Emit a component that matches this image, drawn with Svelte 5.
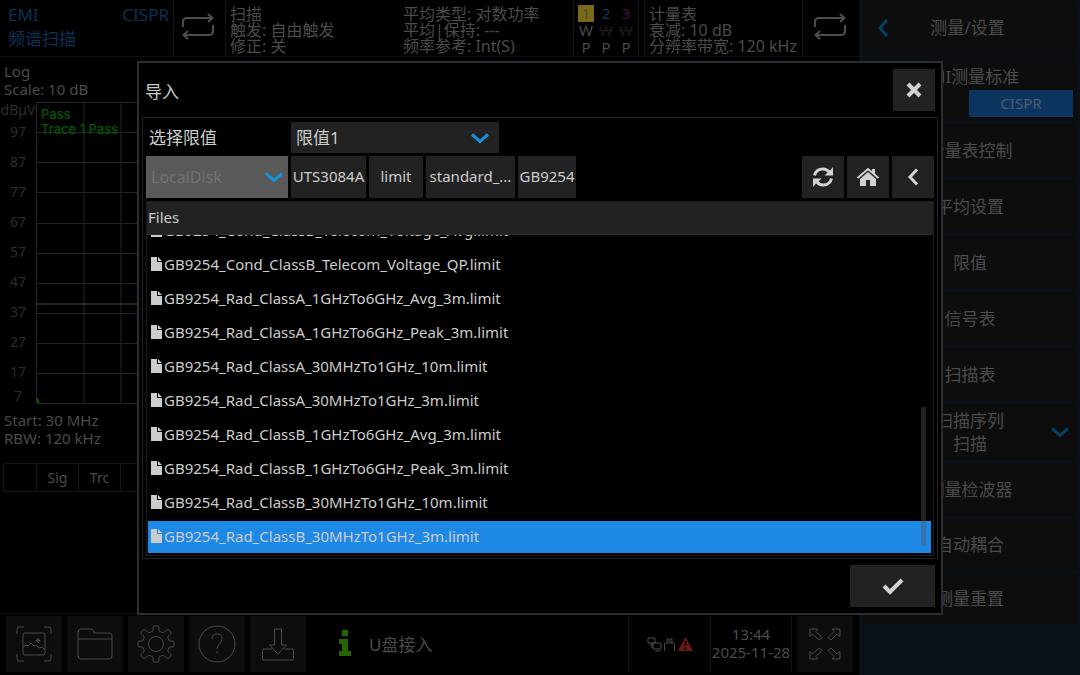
<script>
  const yLabels = [97, 87, 77, 67, 57, 47, 37, 27, 17, 7];
  const gridRows = [30, 60, 90, 121, 151, 181, 211, 241, 271];

  const menuItems = [
    { label: '计量表控制' },
    { label: '平均设置' },
    { label: '限值' },
    { label: '信号表' },
    { label: '扫描表' },
    { label: '扫描序列', value: '扫描' },
    { label: '测量检波器' },
    { label: '自动耦合', short: true },
    { label: '测量重置', short: true }
  ];

  const path = ['UTS3084A', 'limit', 'standard_...', 'GB9254'];

  const files = [
    'GB9254_Cond_ClassB_Telecom_Voltage_Avg.limit',
    'GB9254_Cond_ClassB_Telecom_Voltage_QP.limit',
    'GB9254_Rad_ClassA_1GHzTo6GHz_Avg_3m.limit',
    'GB9254_Rad_ClassA_1GHzTo6GHz_Peak_3m.limit',
    'GB9254_Rad_ClassA_30MHzTo1GHz_10m.limit',
    'GB9254_Rad_ClassA_30MHzTo1GHz_3m.limit',
    'GB9254_Rad_ClassB_1GHzTo6GHz_Avg_3m.limit',
    'GB9254_Rad_ClassB_1GHzTo6GHz_Peak_3m.limit',
    'GB9254_Rad_ClassB_30MHzTo1GHz_10m.limit',
    'GB9254_Rad_ClassB_30MHzTo1GHz_3m.limit'
  ];

  let selected = $state(files.length - 1);
</script>

{#snippet loop()}
  <svg class="loop" width="34" height="28" viewBox="0 0 34 28">
    <path d="M2 14V9q0-4 4-4h25M27 1l4.500 4-4.500 4M32 12v6q0 4-4 4H3M7 18l-4.500 4L7 26" />
  </svg>
{/snippet}

{#snippet chevron()}
  <svg class="chevron" width="20" height="12" viewBox="0 0 20 12"><path d="M2 2.500l8 7 8-7" /></svg>
{/snippet}

<div class="screen">
  <main>
    <header>
      <div class="mode">
        <div class="mode-top"><span>EMI</span><span>CISPR</span></div>
        <div>频谱扫描</div>
      </div>
      <div class="cell center">{@render loop()}</div>
      <div class="cell info">扫描<br />触发: 自由触发<br />修正: 关</div>
      <div class="info">平均类型: 对数功率<br />平均|保持: ---<br />频率参考: Int(S)</div>
      <div class="cell traces">
        <span class="t1">1</span><span class="t2">2</span><span class="t3">3</span>
        <span>W</span><s>W</s><s>W</s>
        <span>P</span><span>P</span><span>P</span>
      </div>
      <div class="cell info meter">计量表<br />衰减: 10 dB<br />分辨率带宽: 120 kHz</div>
      <div class="cell center">{@render loop()}</div>
    </header>

    <section class="sweep">
      <div class="scale">Log<br />Scale: 10 dB</div>
      <div class="chart">
        <div class="axis">
          <span class="unit">dBμV</span>
          {#each yLabels as y}<span>{y}</span>{/each}
        </div>
        <div class="plot">
          <svg width="100%" height="302">
            <g class="grid">
              <path d="M0.500 0v302M48 0v302M85 0v302" />
              <line x1="0" x2="100%" y1="0.500" y2="0.500" />
              {#each gridRows as y}<line x1="0" x2="100%" y1={y + 0.5} y2={y + 0.5} />{/each}
              <line x1="0" x2="100%" y1="301.500" y2="301.500" />
            </g>
            <line class="limit-line" x1="0" x2="100%" y1="202" y2="202" />
            <path class="trace" d="M1 296l2 5" />
          </svg>
          <p>Pass<br />Trace 1 Pass</p>
        </div>
      </div>
      <div class="start">Start: 30 MHz<br />RBW: 120 kHz</div>
      <table>
        <thead><tr><th></th><th>Sig</th><th>Trc</th><th class="wide"></th></tr></thead>
      </table>
    </section>

    <footer>
      <button class="tool" aria-label="Screenshot">
        <svg width="38" height="38" viewBox="0 0 38 38">
          <path d="M2 9V4q0-2 2-2h5M29 2h5q2 0 2 2v5M36 29v5q0 2-2 2h-5M9 36H4q-2 0-2-2v-5" />
          <rect x="8" y="8" width="22" height="22" rx="2" />
          <path d="M8 22l3-2 2 1 3-3 3 3 2-1 3 3 3-1 3 3" />
          <path d="M23 13v5M20.500 15.500h5M21.200 13.700l3.600 3.600M24.800 13.700l-3.600 3.600" />
        </svg>
      </button>
      <button class="tool" aria-label="Files">
        <svg width="38" height="38" viewBox="0 0 38 38">
          <path d="M2 31V7q0-3 3-3h10q2 0 2.500 2l.5 2h15q3 0 3 3v20q0 3-3 3H5q-3 0-3-3zM2 14h34" />
        </svg>
      </button>
      <button class="tool" aria-label="Settings">
        <svg width="38" height="38" viewBox="0 0 38 38">
          <circle cx="19" cy="19" r="7.500" />
          <path d="M16 5.500V2q0-1 1-1h4q1 0 1 1v3.500q0 1 1 1l2.500 1q1 .5 2-.5l2-2q1-1 2 0l2 2q1 1 0 2l-2 2q-1 1-.5 2l1 2.500q0 .5 1 .5h3q1 0 1 1v4q0 1-1 1h-3q-1 0-1 .5l-1 2.500q-.5 1 .5 2l2 2q1 1 0 2l-2 2q-1 1-2 0l-2-2q-1-1-2-.5l-2.500 1q-1 0-1 1V36q0 1-1 1h-4q-1 0-1-1v-3.500q0-1-1-1l-2.500-1q-1-.5-2 .5l-2 2q-1 1-2 0l-2-2q-1-1 0-2l2-2q1-1 .5-2l-1-2.500q0-.5-1-.5H2q-1 0-1-1v-4q0-1 1-1h3q1 0 1-.5l1-2.500q.5-1-.5-2l-2-2q-1-1 0-2l2-2q1-1 2 0l2 2q1 1 2 .5l2.500-1q1 0 1-1z" />
        </svg>
      </button>
      <button class="tool" aria-label="Help">
        <svg width="38" height="38" viewBox="0 0 38 38">
          <circle cx="19" cy="19" r="18" />
          <path d="M14 14q0-5 5-5t5 5q0 3-2.500 5T19 24M19 26.500v2" />
        </svg>
      </button>
      <button class="tool" aria-label="Save">
        <svg width="38" height="38" viewBox="0 0 38 38">
          <path d="M15.500 4h7v16h5L19 29l-8.500-9h5zM13 24H5q-1.500 0-1.500 1.500v8Q3.500 35 5 35h28q1.500 0 1.500-1.500v-8Q34.500 24 33 24h-8" />
        </svg>
      </button>
      <div class="message">
        <svg width="14" height="28" viewBox="0 0 14 28"><path d="M4 1h6v6H4zM1 10h9v12h3v5H1v-5h3v-7H1z" /></svg>
        <span>U盘接入</span>
      </div>
      <div class="status">
        <svg width="46" height="16" viewBox="0 0 46 16">
          <path d="M1 2h7v5H1zM3 9h3M5 7v5M6 7h8v6H6zM8 15h5M17.500 15V8q0-1 1-1h8q1 0 1 1v7M20 7V3h5v4M21 5h3" />
          <path class="warn" d="M38.500 1L46 15H31z" />
          <path class="bang" d="M38.500 5v5M38.500 11.500v2" />
        </svg>
      </div>
      <div class="clock">13:44<br />2025-11-28</div>
      <button class="tool expand" aria-label="Full screen">
        <svg width="32" height="32" viewBox="0 0 32 32">
          <path d="M1 1h8L7 3.500l6 6L10 12 3.500 6 1 8.500zM31 1h-8l2 2.500-6 6 3 2.500 6-6 3 2.500zM1 31h8l-2-2.500 6-6-3-2.500-6.500 6L1 23.500zM31 31h-8l2-2.500-6-6 3-2.500 6 6 3-2.500z" />
        </svg>
      </button>
    </footer>
  </main>

  <aside>
    <div class="menu-title">
      <button aria-label="Back"><svg width="12" height="20" viewBox="0 0 12 20"><path d="M10 2L3 10l7 8" /></svg></button>
      <span>测量/设置</span>
    </div>
    <div class="standard">
      <span>EMI测量标准</span>
      <button>CISPR</button>
    </div>
    {#each menuItems as item}
      <button class="menu-item" class:double={item.value} class:short={item.short}>
        <span>{item.label}</span>
        {#if item.value}
          <span>{item.value}</span>
          <i>{@render chevron()}</i>
        {/if}
      </button>
    {/each}
  </aside>

  <div class="dialog" role="dialog" aria-labelledby="dialog-title">
    <div class="dialog-head">
      <h1 id="dialog-title">导入</h1>
      <button class="square" aria-label="Close">
        <svg width="16" height="16" viewBox="0 0 16 16"><path class="bold" d="M2 2l12 12M14 2L2 14" /></svg>
      </button>
    </div>

    <div class="panel">
      <div class="row limit-row">
        <label for="limit">选择限值</label>
        <div class="select">
          <select id="limit"><option>限值1</option></select>
          {@render chevron()}
        </div>
      </div>

      <div class="row">
        <div class="select disk">
          <select aria-label="Disk" disabled><option>LocalDisk</option></select>
          {@render chevron()}
        </div>
        {#each path as dir, i}
          <button class="crumb crumb-{i}">{dir}</button>
        {/each}
        <div class="nav">
          <button class="square" aria-label="Refresh">
            <svg width="22" height="22" viewBox="0 0 22 22">
              <path class="mid" d="M2.500 9.500Q4 3 11 3q4 0 7 4M19.500 12.500Q18 19 11 19q-4 0-7-4" />
              <path class="solid" d="M21 1v8.500h-8.500l3-3 3-2.500zM1 21v-8.500h8.500l-3 3-3 2.500z" />
            </svg>
          </button>
          <button class="square" aria-label="Home">
            <svg width="24" height="20" viewBox="0 0 24 20">
              <path class="solid" d="M4 12l8-7 8 7v7h-6v-6h-4v6H4zM16 2h3v6l-3-3z" />
              <path class="thin" d="M1.500 11L12 2l10.500 9" />
            </svg>
          </button>
          <button class="square" aria-label="Up">
            <svg width="14" height="20" viewBox="0 0 14 20"><path class="mid" d="M11 2.500L4 10l7 7.500" /></svg>
          </button>
        </div>
      </div>

      <div class="browser">
        <div class="files-head">Files</div>
        <div class="files" role="listbox" aria-label="Files">
          {#each files as file, i}
            <button class="file" class:selected={selected === i} role="option" aria-selected={selected === i} onclick={() => (selected = i)}>
              <svg width="11" height="14" viewBox="0 0 11 14"><path d="M0 0h6v5h5v9H0zM7 0l4 4H7z" /></svg>{file}
            </button>
          {/each}
          <div class="thumb"></div>
        </div>
      </div>
    </div>

    <div class="dialog-foot">
      <button class="ok" aria-label="OK">
        <svg width="22" height="18" viewBox="0 0 22 18"><path class="check" d="M2 9l6 6L20 3" /></svg>
      </button>
    </div>
  </div>
</div>

<style>
  :global(body) {
    background: #000;
  }

  .screen {
    position: relative;
    display: grid;
    grid-template-columns: 1fr 221px;
    min-height: 100vh;
    background: #000;
    color: #4b4b4b;
    font-family: "Noto Sans", "Noto Sans CJK SC", sans-serif;
    font-size: 15px;
  }

  * {
    box-sizing: border-box;
  }

  button,
  select {
    margin: 0;
    padding: 0;
    border: 0;
    border-radius: 0;
    background: none;
    color: inherit;
    font: inherit;
  }

  svg {
    display: block;
    flex: none;
    fill: none;
  }

  main {
    display: flex;
    flex-direction: column;
    min-width: 0;
  }

  /* --- top status bar --- */
  header {
    display: grid;
    grid-template-columns: 173px 52px 1fr 1fr 66px 163px 57px;
    height: 57px;
    border-bottom: 1px solid #111;
  }

  .mode {
    padding: 3px 4px 0 8px;
    color: #0b3055;
    font-size: 17px;
    line-height: 24px;
  }

  .mode-top {
    display: flex;
    justify-content: space-between;
  }

  .cell {
    border-left: 1px solid #141414;
  }

  .center {
    display: flex;
    align-items: center;
    justify-content: center;
    padding: 0 3px 2px 0;
  }

  .loop {
    stroke: #4d4d4d;
    stroke-width: 2;
  }

  .info {
    padding: 6px 4px 0;
    font-size: 16px;
    line-height: 16px;
    white-space: nowrap;
  }

  .traces {
    display: grid;
    grid-template-columns: repeat(3, 16px);
    gap: 0 4px;
    padding: 5px 4px 0;
    border-right: 1px solid #141414;
    line-height: 17px;
    text-align: center;
  }

  .traces s {
    color: #1b1b1b;
  }

  .traces .t1 {
    background: #786a17;
  }

  .traces .t2 {
    color: #0b3a63;
  }

  .traces .t3 {
    color: #470d4c;
  }

  .meter {
    margin-left: 5px;
  }

  /* --- sweep area --- */
  .sweep {
    flex: 1;
    padding-top: 5px;
  }

  .scale,
  .start {
    padding-left: 4px;
    line-height: 18px;
  }

  .chart {
    display: flex;
    margin-top: 4px;
  }

  .axis {
    display: flex;
    flex-direction: column;
    width: 36px;
    color: #2d2d2d;
    font-size: 14px;
    line-height: 30px;
    text-align: center;
  }

  .axis .unit {
    line-height: 15px;
  }

  .axis span:last-child {
    line-height: 18px;
  }

  .plot {
    position: relative;
    flex: 1;
  }

  .grid {
    stroke: #242424;
  }

  .limit-line {
    stroke: #5a4a08;
  }

  .trace {
    stroke: #005a00;
    stroke-width: 2;
  }

  .plot p {
    position: absolute;
    top: 5px;
    left: 5px;
    margin: 0;
    color: #005a00;
    font-family: Inter, sans-serif;
    font-size: 13px;
    font-weight: 500;
    line-height: 15px;
  }

  .start {
    padding-top: 6px;
  }

  table {
    width: 100%;
    margin: 16px 0 0 3px;
    border-collapse: collapse;
    table-layout: fixed;
    font-size: 14px;
  }

  th {
    width: 42px;
    height: 28px;
    padding: 0;
    border: 1px solid #151515;
    font-weight: 400;
  }

  th:first-child {
    width: 33px;
  }

  th.wide {
    width: auto;
  }

  /* --- bottom toolbar --- */
  footer {
    display: flex;
    gap: 5px;
    height: 62px;
    padding: 2px 6px 3px;
    border-top: 1px solid #111;
  }

  .tool {
    display: flex;
    flex: none;
    align-items: center;
    justify-content: center;
    width: 56px;
    background: #0d0d0d;
  }

  .tool svg,
  .status svg {
    stroke: #4b4b4b;
  }

  .message {
    display: flex;
    flex: 1;
    align-items: center;
    gap: 17px;
    padding: 0 0 2px 27px;
    font-size: 17px;
  }

  .message svg {
    fill: #256400;
  }

  .status,
  .clock {
    display: flex;
    align-items: center;
    justify-content: center;
    border-left: 1px solid #141414;
  }

  .status {
    width: 82px;
  }

  .status .warn {
    fill: #6e1a14;
    stroke: none;
  }

  .status .bang {
    stroke: #000;
    stroke-width: 2;
  }

  .clock {
    width: 82px;
    margin-left: -5px;
    padding-bottom: 2px;
    border-right: 1px solid #141414;
    line-height: 18px;
    text-align: center;
    white-space: nowrap;
  }

  /* --- side menu --- */
  aside {
    display: flex;
    flex-direction: column;
    gap: 3px;
    padding: 1px 3px 0 4px;
    background: #091017;
    font-size: 17px;
    line-height: 23px;
  }

  .menu-title,
  .standard,
  .menu-item {
    position: relative;
    flex: none;
    background: #0d0d0d;
  }

  .menu-title {
    display: flex;
    align-items: center;
    height: 53px;
    padding: 0 15px 0 14px;
  }

  .menu-title svg {
    stroke: #073f63;
    stroke-width: 3;
  }

  .menu-title span {
    flex: 1;
    padding-right: 16px;
    text-align: center;
  }

  .standard {
    display: flex;
    flex-direction: column;
    align-items: center;
    height: 64px;
    padding: 8px 4px 0;
  }

  .standard button {
    align-self: flex-end;
    width: 104px;
    height: 27px;
    margin-top: 2px;
    background: #0b345f;
    color: #4e5c6a;
    font-size: 15px;
    line-height: 25px;
  }

  .menu-item {
    height: 53px;
  }

  .menu-item.double {
    height: 56px;
  }

  .menu-item.short {
    height: 51px;
  }

  .menu-item span {
    display: block;
  }

  .menu-item i {
    position: absolute;
    top: 22px;
    right: 7px;
  }

  .chevron {
    stroke: #1592dc;
    stroke-width: 3;
  }

  .menu-item .chevron {
    stroke: #073f63;
  }

  /* --- import dialog --- */
  .dialog {
    position: absolute;
    inset: 61px 137px 60px;
    display: flex;
    flex-direction: column;
    padding: 0 3px;
    border: 2px solid #2b2e33;
    background: #000;
    color: #ccc;
  }

  .dialog-head {
    display: flex;
    align-items: center;
    justify-content: space-between;
    height: 54px;
    padding: 0 3px;
  }

  h1 {
    margin: 0;
    font-size: 17px;
    font-weight: 400;
  }

  .square,
  .ok {
    display: flex;
    align-items: center;
    justify-content: center;
    width: 42px;
    height: 42px;
    background: #222;
  }

  .bold,
  .mid,
  .thin,
  .check {
    stroke: #d2d2d2;
    stroke-width: 4;
  }

  .mid {
    stroke-width: 3;
  }

  .thin {
    stroke-width: 2;
  }

  .solid {
    fill: #d2d2d2;
  }

  .panel {
    display: flex;
    flex: 1;
    flex-direction: column;
    gap: 3px;
    min-height: 0;
    padding: 4px 3px 2px;
    border: 1px solid #202124;
  }

  .row {
    display: flex;
    gap: 3px;
    height: 42px;
  }

  .limit-row {
    height: 31px;
  }

  label {
    width: 142px;
    padding-left: 3px;
    font-size: 17px;
    line-height: 31px;
  }

  .select {
    position: relative;
    display: flex;
    align-items: center;
    width: 208px;
    background: #222;
  }

  .select select {
    width: 100%;
    height: 100%;
    padding-left: 5px;
    appearance: none;
    font-size: 17px;
  }

  .select .chevron {
    position: absolute;
    right: 9px;
    pointer-events: none;
  }

  .disk {
    width: 142px;
    background: #595959;
  }

  .disk select {
    color: #727272;
    font-size: 16px;
    opacity: 1;
  }

  .disk .chevron {
    right: 4px;
  }

  .crumb {
    padding-bottom: 2px;
    background: #222;
    text-align: center;
  }

  .crumb-0 {
    width: 75px;
  }

  .crumb-1 {
    width: 54px;
  }

  .crumb-2 {
    width: 89px;
  }

  .crumb-3 {
    width: 58px;
  }

  .nav {
    display: flex;
    gap: 3px;
    margin-left: auto;
  }

  .browser {
    display: flex;
    flex: 1;
    flex-direction: column;
    min-height: 0;
    border: 1px solid #1b1c1f;
  }

  .files-head {
    padding: 0 1px 1px;
    border-bottom: 1px solid #2b2e33;
    background: #222;
    line-height: 31px;
  }

  .files {
    position: relative;
    display: flex;
    flex: 1;
    flex-direction: column;
    justify-content: flex-end;
    gap: 2px;
    min-height: 0;
    padding: 0 2px 2px 1px;
    overflow: hidden;
  }

  .file {
    display: flex;
    flex: none;
    align-items: center;
    gap: 2px;
    height: 32px;
    padding: 0 0 2px 3px;
    text-align: left;
    white-space: nowrap;
  }

  .file svg {
    fill: #ccc;
  }

  .file.selected {
    background: #1e88e5;
  }

  .thumb {
    position: absolute;
    right: 7px;
    bottom: 9px;
    width: 5px;
    height: 139px;
    background: rgba(85, 85, 85, 0.4);
  }

  .dialog-foot {
    display: flex;
    justify-content: flex-end;
    height: 54px;
    padding: 6px 3px;
  }

  .ok {
    width: 85px;
  }
</style>
